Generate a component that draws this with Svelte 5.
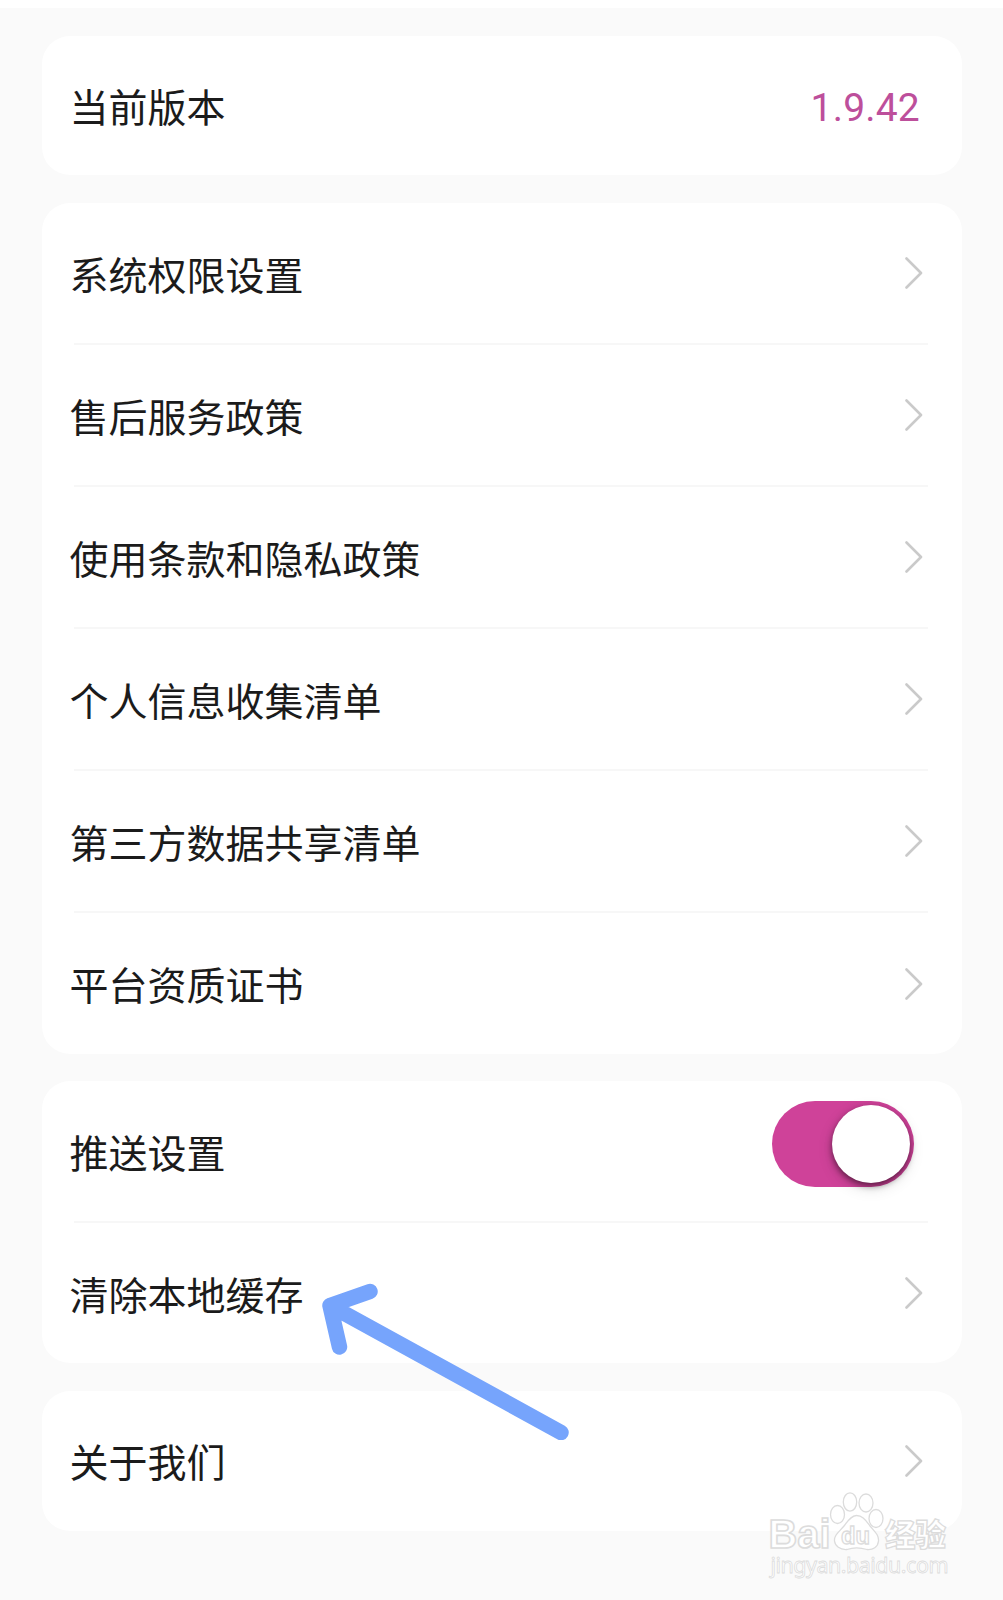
<script>
  const groups = [
    [{ label: '当前版本', value: '1.9.42' }],
    [
      { label: '系统权限设置' },
      { label: '售后服务政策' },
      { label: '使用条款和隐私政策' },
      { label: '个人信息收集清单' },
      { label: '第三方数据共享清单' },
      { label: '平台资质证书' }
    ],
    [{ label: '推送设置', toggle: true }, { label: '清除本地缓存' }],
    [{ label: '关于我们' }]
  ];
  let push = $state(true);
</script>

<main class="screen">
  {#each groups as rows}
    <section class="card">
      {#each rows as row}
        <div class="row">
          <span class="label">{row.label}</span>
          {#if row.value}
            <span class="value">{row.value}</span>
          {:else if row.toggle}
            <button
              class="switch"
              class:on={push}
              role="switch"
              aria-checked={push}
              aria-label={row.label}
              onclick={() => (push = !push)}
            >
              <span class="knob"></span>
            </button>
          {:else}
            <svg class="chevron" viewBox="0 0 18 32" width="18" height="32" aria-hidden="true">
              <path d="M1.500 1.500 16 16 1.500 30.500" />
            </svg>
          {/if}
        </div>
      {/each}
    </section>
  {/each}

  <!-- hand-drawn pointer over the cache row -->
  <svg class="pointer" viewBox="0 0 260 170" width="260" height="170" aria-hidden="true">
    <path d="M60 21.500 20 35.500 29.500 77M20 35.500 251 162.500" />
  </svg>

  <svg class="watermark" viewBox="0 0 190 90" width="190" height="90">
    <g class="outline">
      <text class="brand" x="3.500" y="58" textLength="62" lengthAdjust="spacingAndGlyphs">Bai</text>
      <ellipse cx="72.500" cy="24.500" rx="7" ry="9" />
      <ellipse cx="85" cy="12" rx="6.700" ry="9.200" />
      <ellipse cx="101" cy="13" rx="7" ry="9" />
      <ellipse cx="111" cy="28.500" rx="7" ry="9" />
      <path d="M91.500 25.500C98 25.500 101 31 105 36C110 42 114 45 113.500 51C113 57 108 60 102 59.500C95 57.500 88 57.500 82 59.500C75 60 70 56 69.500 51C69 45 74 42 79 36C83 31 86 25.500 91.500 25.500Z" />
      <text class="du" x="76" y="53.500" textLength="29" lengthAdjust="spacingAndGlyphs">du</text>
      <text class="cn" x="120" y="55.500" textLength="61" lengthAdjust="spacingAndGlyphs">经验</text>
      <text class="url" x="5.500" y="82.500" textLength="178">jingyan.baidu.com</text>
    </g>
  </svg>
</main>

<style>
  :global(body) {
    margin: 0;
    background: #fafafa;
  }
  .screen {
    position: relative;
    box-sizing: border-box;
    width: 1003px;
    height: 1600px;
    padding: 28px 41.5px 0 41.5px;
    border-top: 8px solid #fff;
    background: #fafafa;
    display: flex;
    flex-direction: column;
    gap: 27.6px;
    overflow: hidden;
    font-family: 'Noto Sans CJK SC', sans-serif;
  }
  .card {
    flex: none;
    background: #fff;
    border-radius: 28px;
  }
  .row {
    display: flex;
    align-items: center;
    justify-content: space-between;
    height: 140.1px;
    margin: 0 34px 0 32.5px;
  }
  .card:first-child .row {
    height: 139.4px;
  }
  .row + .row {
    border-top: 2px solid #f7f7f7;
  }
  .label {
    margin-left: -4.5px;
    font-size: 39px;
    line-height: 56px;
    color: #1b1b1b;
    white-space: nowrap;
    padding-bottom: 1px;
    font-weight: 400;
  }
  .value {
    font-family: Roboto, sans-serif;
    font-size: 39px;
    letter-spacing: 0.2px;
    color: #bd4f9b;
    margin-right: 7.5px;
    padding-top: 4px;
  }
  .chevron {
    margin-right: 5px;
  }
  .chevron path {
    fill: none;
    stroke: #cacaca;
    stroke-width: 2.6;
    stroke-linecap: round;
    stroke-linejoin: round;
  }
  .switch {
    display: flex;
    align-items: center;
    width: 142px;
    height: 86px;
    margin: 0 13.5px 14px 0;
    padding: 0 4px;
    border: 0;
    border-radius: 43px;
    background: #ddd;
  }
  .switch.on {
    justify-content: flex-end;
    background: #cf4299;
  }
  .knob {
    width: 78px;
    height: 78px;
    border-radius: 50%;
    background: #fff;
    box-shadow: 0 3px 6px rgba(0, 0, 0, 0.5), 0 5px 16px rgba(0, 0, 0, 0.12);
  }
  .pointer {
    position: absolute;
    left: 310px;
    top: 1262px;
  }
  .pointer path {
    fill: none;
    stroke: #76a4fc;
    stroke-width: 15.5;
    stroke-linecap: round;
    stroke-linejoin: round;
  }
  .watermark {
    position: absolute;
    left: 765px;
    top: 1482px;
  }
  .outline {
    fill: #fff;
    stroke: #dcdcdc;
    stroke-width: 1.3;
  }
  .brand {
    font: 700 40px 'Liberation Sans', sans-serif;
    stroke-width: 1.6;
  }
  .du {
    font: 700 24px 'Liberation Sans', sans-serif;
  }
  .cn {
    font: 900 31px 'Noto Sans CJK SC', sans-serif;
  }
  .url {
    font: 400 21.5px 'Noto Sans', sans-serif;
    stroke-width: 0.8;
  }
</style>
